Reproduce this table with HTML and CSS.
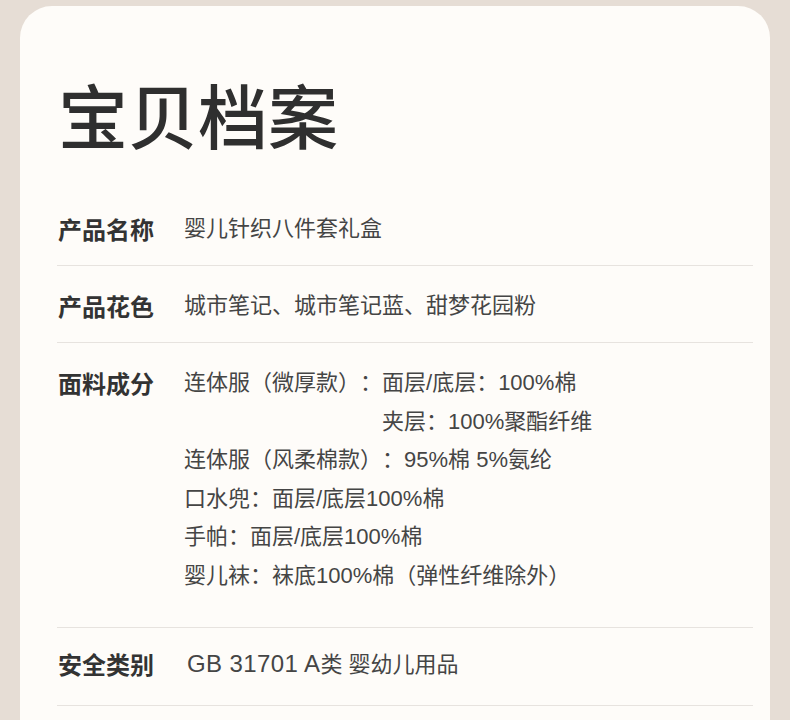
FILE: index.html
```html
<!DOCTYPE html>
<html lang="zh-CN">
<head>
    <meta charset="UTF-8">
    <meta name="viewport" content="width=device-width, initial-scale=1.0">
    <title>宝贝档案</title>
    <link rel="stylesheet" href="styles.css">
</head>
<body>
    <div class="card">
        <h1 class="title">宝贝档案</h1>

        <div class="spec-list">
            <div class="spec-row">
                <div class="spec-label">产品名称</div>
                <div class="spec-value">婴儿针织八件套礼盒</div>
            </div>

            <div class="spec-row">
                <div class="spec-label">产品花色</div>
                <div class="spec-value">城市笔记、城市笔记蓝、甜梦花园粉</div>
            </div>

            <div class="spec-row spec-row-tall">
                <div class="spec-label">面料成分</div>
                <div class="spec-value">
                    <div class="part">
                        <span class="part-name">连体服（微厚款）：</span>
                        <div class="part-lines">
                            <div>面层/底层：100%棉</div>
                            <div>夹层：100%聚酯纤维</div>
                        </div>
                    </div>
                    <div>连体服（风柔棉款）：95%棉 5%氨纶</div>
                    <div>口水兜：面层/底层100%棉</div>
                    <div>手帕：面层/底层100%棉</div>
                    <div>婴儿袜：袜底100%棉（弹性纤维除外）</div>
                </div>
            </div>

            <div class="spec-row spec-row-last">
                <div class="spec-label">安全类别</div>
                <div class="spec-value spec-value-std"><span class="std-code">GB 31701 A</span>类 婴幼儿用品</div>
            </div>
        </div>
    </div>
</body>
</html>
```

FILE: styles.css
```css
* {
    margin: 0;
    padding: 0;
    box-sizing: border-box;
}

body {
    background: #e6ddd5;
    font-family: "Noto Sans CJK SC", "Noto Sans", sans-serif;
    color: #333333;
}

.card {
    margin: 6px 20px 0;
    min-height: 760px;
    background: #fefcf9;
    border-radius: 32px 32px 0 0;
    padding: 72px 17px 0 37px;
}

.title {
    font-size: 70px;
    line-height: 72px;
    font-weight: 500;
    color: #2f2f2f;
    padding-left: 1px;
    margin-bottom: 60px;
}

.spec-row {
    display: grid;
    grid-template-columns: 127px 1fr;
    padding: 21px 0 17px;
    border-bottom: 1px solid #e7e3df;
    font-size: 22px;
    line-height: 38px;
}

.spec-row:first-child {
    padding-top: 0;
}

.spec-row-tall {
    padding-bottom: 32px;
}

.spec-row-tall .spec-value {
    line-height: 38.5px;
}

.spec-row-last {
    padding: 17px 0 21px;
}

.spec-label {
    font-size: 24px;
    font-weight: 700;
    color: #333333;
    padding-left: 1px;
}

.spec-value {
    font-family: "Liberation Sans", "Noto Sans CJK SC", sans-serif;
    color: #454545;
    text-spacing-trim: space-all;
}

.spec-value-std {
    padding-left: 3px;
}

.std-code {
    font-size: 24px;
    letter-spacing: 0.4px;
}

.part {
    display: flex;
}

.part-name {
    white-space: nowrap;
}
```
